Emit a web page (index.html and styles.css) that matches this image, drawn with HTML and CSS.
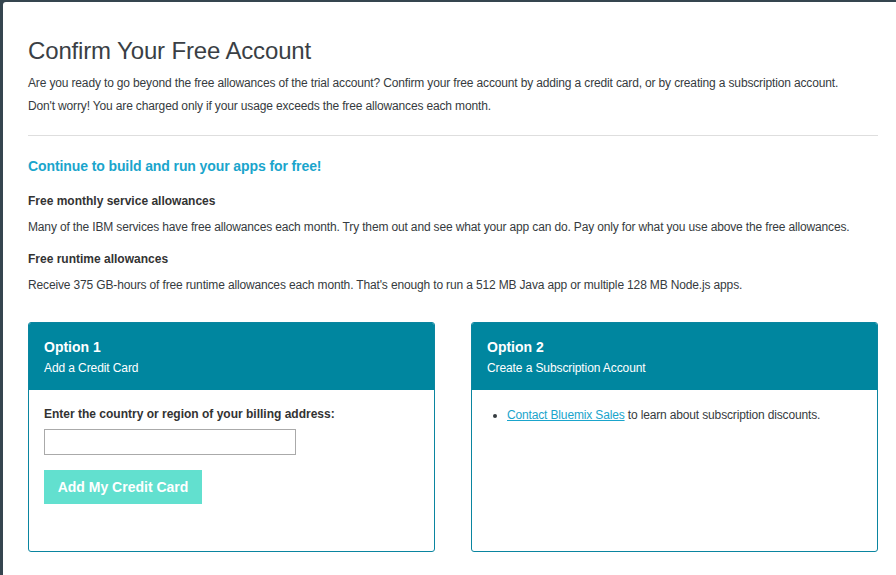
FILE: index.html
```html
<!DOCTYPE html>
<html>
<head>
<meta charset="utf-8">
<link rel="stylesheet" href="styles.css">
</head>
<body>
<div class="panel">
  <h1 class="title">Confirm Your Free Account</h1>
  <p class="intro">Are you ready to go beyond the free allowances of the trial account? Confirm your free account by adding a credit card, or by creating a subscription account.<br>Don't worry! You are charged only if your usage exceeds the free allowances each month.</p>
  <hr class="rule">
  <h2 class="lead">Continue to build and run your apps for free!</h2>
  <h3 class="sub sub-first">Free monthly service allowances</h3>
  <p class="text">Many of the IBM services have free allowances each month. Try them out and see what your app can do. Pay only for what you use above the free allowances.</p>
  <h3 class="sub">Free runtime allowances</h3>
  <p class="text">Receive 375 GB-hours of free runtime allowances each month. That's enough to run a 512 MB Java app or multiple 128 MB Node.js apps.</p>
  <div class="options">
    <div class="card">
      <div class="card-head">
        <div class="card-title">Option 1</div>
        <div class="card-sub">Add a Credit Card</div>
      </div>
      <div class="card-body">
        <label class="field-label">Enter the country or region of your billing address:</label>
        <input class="field" type="text">
        <button class="btn">Add My Credit Card</button>
      </div>
    </div>
    <div class="card">
      <div class="card-head">
        <div class="card-title">Option 2</div>
        <div class="card-sub">Create a Subscription Account</div>
      </div>
      <div class="card-body">
        <ul class="list">
          <li><a class="link" href="#">Contact Bluemix Sales</a> to learn about subscription discounts.</li>
        </ul>
      </div>
    </div>
  </div>
</div>
</body>
</html>
```

FILE: styles.css
```css
html, body {
  margin: 0;
  padding: 0;
  height: 100%;
}
body {
  background: #35454f;
  font-family: "Liberation Sans", Arial, sans-serif;
  color: #363b40;
  overflow: hidden;
}
.panel {
  margin: 2px 0 0 3px;
  background: #fff;
  border-top-left-radius: 3px;
  min-height: 573px;
  padding: 35px 18px 0 25px;
  box-sizing: border-box;
}
.title {
  margin: 0;
  font-size: 24px;
  line-height: 28px;
  font-weight: 300;
  color: #3a3f45;
  letter-spacing: -0.15px;
}
.intro {
  margin: 7px 0 0;
  font-size: 12px;
  line-height: 23px;
  letter-spacing: -0.15px;
}
.rule {
  margin: 17px 0 0;
  border: 0;
  border-top: 1px solid #dedede;
  height: 0;
}
.lead {
  margin: 20px 0 0;
  font-size: 14px;
  line-height: 20px;
  font-weight: bold;
  color: #1aa5cc;
  letter-spacing: -0.1px;
}
.sub {
  margin: 14px 0 0;
  font-size: 12px;
  line-height: 18px;
  font-weight: bold;
  color: #333;
}
.sub-first {
  margin-top: 16px;
}
.text {
  margin: 8px 0 0;
  font-size: 12px;
  line-height: 18px;
  letter-spacing: -0.15px;
}
.options {
  margin-top: 28px;
  display: grid;
  grid-template-columns: 407px 407px;
  column-gap: 36px;
}
.card {
  border: 1px solid #0a85a0;
  border-radius: 3px;
  overflow: hidden;
  height: 230px;
  box-sizing: border-box;
}
.card-head {
  background: #00869f;
  color: #fff;
  padding: 15px 15px 14px;
}
.card-title {
  font-size: 14px;
  font-weight: bold;
  line-height: 18px;
}
.card-sub {
  margin-top: 4px;
  font-size: 12px;
  line-height: 16px;
  letter-spacing: -0.1px;
}
.card-body {
  padding: 16px 15px 0;
}
.field-label {
  display: block;
  font-size: 12px;
  line-height: 16px;
  font-weight: bold;
  color: #333;
}
.field {
  display: block;
  margin-top: 7px;
  width: 252px;
  height: 26px;
  box-sizing: border-box;
  border: 1px solid #aaa;
  border-radius: 0;
  padding: 0 6px;
  font-family: inherit;
  font-size: 12px;
  outline: none;
}
.btn {
  display: block;
  margin-top: 15px;
  width: 158px;
  height: 34px;
  border: 0;
  background: #62e0cf;
  color: #fff;
  font-family: inherit;
  font-size: 14px;
  font-weight: bold;
  padding: 0;
}
.list {
  margin: 0;
  padding: 0 0 0 20px;
  font-size: 12px;
  line-height: 16px;
  letter-spacing: -0.15px;
}
.list li {
  margin: 0;
  padding-top: 1px;
}
.link {
  color: #1aa5cc;
  text-decoration: underline;
}
```
